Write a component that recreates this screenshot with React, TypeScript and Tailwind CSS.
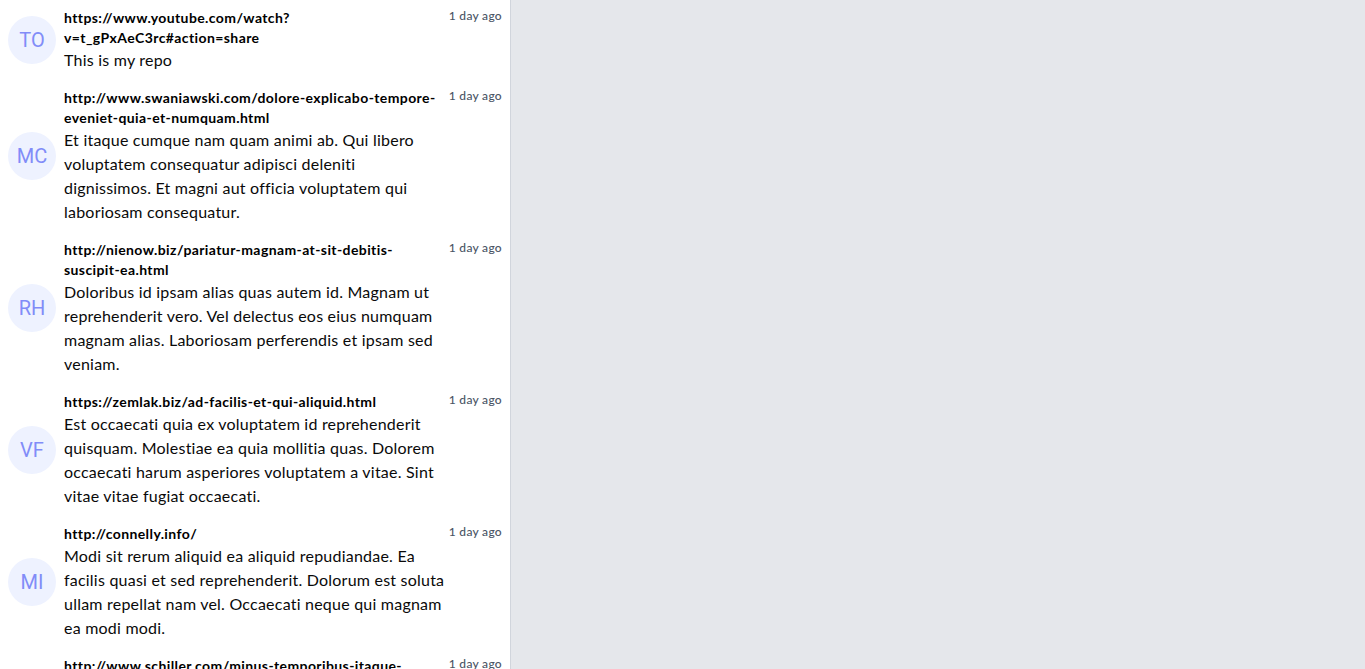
import React from "react";

type Post = {
  id: number;
  initials: string;
  url: string;
  body: string;
  time: string;
};

const posts: Post[] = [
  {
    id: 1,
    initials: "TO",
    url: "https://www.youtube.com/watch?v=t_gPxAeC3rc#action=share",
    body: "This is my repo",
    time: "1 day ago",
  },
  {
    id: 2,
    initials: "MC",
    url: "http://www.swaniawski.com/dolore-explicabo-tempore-eveniet-quia-et-numquam.html",
    body: "Et itaque cumque nam quam animi ab. Qui libero voluptatem consequatur adipisci deleniti dignissimos. Et magni aut officia voluptatem qui laboriosam consequatur.",
    time: "1 day ago",
  },
  {
    id: 3,
    initials: "RH",
    url: "http://nienow.biz/pariatur-magnam-at-sit-debitis-suscipit-ea.html",
    body: "Doloribus id ipsam alias quas autem id. Magnam ut reprehenderit vero. Vel delectus eos eius numquam magnam alias. Laboriosam perferendis et ipsam sed veniam.",
    time: "1 day ago",
  },
  {
    id: 4,
    initials: "VF",
    url: "https://zemlak.biz/ad-facilis-et-qui-aliquid.html",
    body: "Est occaecati quia ex voluptatem id reprehenderit quisquam. Molestiae ea quia mollitia quas. Dolorem occaecati harum asperiores voluptatem a vitae. Sint vitae vitae fugiat occaecati.",
    time: "1 day ago",
  },
  {
    id: 5,
    initials: "MI",
    url: "http://connelly.info/",
    body: "Modi sit rerum aliquid ea aliquid repudiandae. Ea facilis quasi et sed reprehenderit. Dolorum est soluta ullam repellat nam vel. Occaecati neque qui magnam ea modi modi.",
    time: "1 day ago",
  },
  {
    id: 6,
    initials: "KS",
    url: "http://www.schiller.com/minus-temporibus-itaque-autem-voluptas.html",
    body: "Quia voluptas rerum sit dolores. Aut ut nihil dolorum sunt ut et. Ipsam et quo est quae.",
    time: "1 day ago",
  },
];

const PostRow = ({ post }: { post: Post }) => (
  <div className="flex items-center gap-2 px-2 py-2">
    <div className="flex h-12 w-12 shrink-0 items-center justify-center rounded-full bg-[#eef2ff] text-xl text-[#818cf8] font-['Roboto',sans-serif]">
      {post.initials}
    </div>
    <div className="flex min-w-0 flex-1 items-start">
      <div className="mr-[3px] min-w-0 flex-1">
        <div className="break-words text-sm leading-5 font-bold tracking-[0.4px] text-black">{post.url}</div>
        <div className="text-base leading-6 tracking-[0.22px] text-[#0a0a0a]">{post.body}</div>
      </div>
      <div className="whitespace-nowrap text-xs font-medium tracking-[0.3px] text-gray-600">{post.time}</div>
    </div>
  </div>
);

export default function App() {
  return (
    <div className="flex h-screen overflow-hidden bg-gray-200 font-['Lato',sans-serif]">
      <div className="w-[511px] shrink-0 overflow-hidden border-r border-gray-300 bg-white">
        {posts.map((p) => (
          <PostRow key={p.id} post={p} />
        ))}
      </div>
      <div className="flex-1" />
    </div>
  );
}
